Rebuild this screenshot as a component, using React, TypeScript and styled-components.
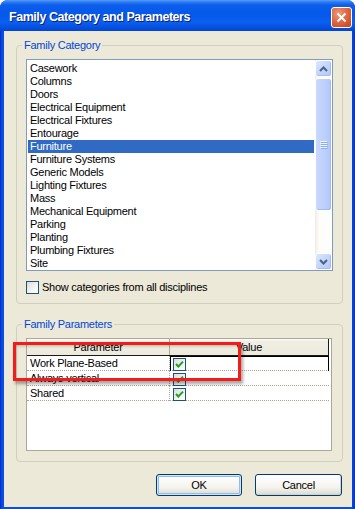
import React from "react";
import styled, { createGlobalStyle } from "styled-components";

const GlobalStyle = createGlobalStyle`
  html, body {
    margin: 0;
    padding: 0;
    background: #ffffff;
  }
  body {
    font-family: "Liberation Sans", Arial, sans-serif;
    font-size: 11px;
    letter-spacing: -0.25px;
    color: #000;
  }
`;

const categories = [
  "Casework",
  "Columns",
  "Doors",
  "Electrical Equipment",
  "Electrical Fixtures",
  "Entourage",
  "Furniture",
  "Furniture Systems",
  "Generic Models",
  "Lighting Fixtures",
  "Mass",
  "Mechanical Equipment",
  "Parking",
  "Planting",
  "Plumbing Fixtures",
  "Site",
];

const parameters = [
  { name: "Work Plane-Based", value: true, current: true },
  { name: "Always vertical", value: true, current: false },
  { name: "Shared", value: true, current: false },
];

const Window = styled.div`
  position: relative;
  width: 355px;
  height: 509px;
  display: flex;
  flex-direction: column;
  background: linear-gradient(to right, #0027c8 0px, #0a4fe2 2px, #0a4fe2 351px, #0034d0 355px);
  border-radius: 8px 8px 0 0;
  overflow: hidden;
`;

const TitleBar = styled.div`
  height: 31px;
  flex: 0 0 31px;
  display: flex;
  align-items: flex-start;
  justify-content: space-between;
  padding: 0 3px 0 9px;
  box-sizing: border-box;
  background: linear-gradient(
    to bottom,
    #5a9ef8 0px,
    #2b7cf4 2px,
    #0d5deb 5px,
    #0458ea 14px,
    #0b60f0 22px,
    #0552e2 27px,
    #0344d2 31px
  );
`;

const Title = styled.div`
  padding-top: 9px;
  font-family: "Liberation Sans", Arial, sans-serif;
  font-weight: bold;
  font-size: 12.5px;
  letter-spacing: -0.45px;
  line-height: 16px;
  color: #ffffff;
  text-shadow: 1px 1px 0 #0a1e74;
  white-space: nowrap;
`;

const CloseButton = styled.div`
  margin-top: 7px;
  width: 21px;
  height: 21px;
  box-sizing: border-box;
  border: 1px solid #ffffff;
  border-radius: 3px;
  background: radial-gradient(circle at 35% 30%, #ec9a7f 0%, #df6a45 45%, #c63d17 100%);
  display: flex;
  align-items: center;
  justify-content: center;
`;

const Frame = styled.div`
  flex: 1;
  display: flex;
  padding: 0 3px 2px 4px;
  min-height: 0;
`;

const Body = styled.div`
  flex: 1;
  display: flex;
  flex-direction: column;
  background: #ece9d8;
  padding: 8px 9px 0 12px;
`;

const GroupBox = styled.fieldset<{ $gap: number; $bottom: number }>`
  margin: ${(p) => p.$gap}px 0 0 0;
  padding: 0 9px ${(p) => p.$bottom}px 9px;
  border: 1px solid #d0d0bf;
  border-radius: 4px;
  min-width: 0;
`;

const Legend = styled.legend`
  margin-left: -4px;
  padding: 0 2px;
  font-family: "Liberation Sans", Arial, sans-serif;
  font-size: 11px;
  line-height: 13px;
  color: #0046d5;
`;

const ListBox = styled.div`
  margin-top: 7px;
  width: 307px;
  height: 212px;
  box-sizing: border-box;
  border: 1px solid #7f9db9;
  background: #ffffff;
  display: flex;
`;

const ListItems = styled.div`
  flex: 1;
  padding: 2px 1px 0 1px;
`;

const ListItem = styled.div<{ $selected?: boolean }>`
  height: 13px;
  line-height: 13px;
  padding-left: 2px;
  white-space: nowrap;
  background: ${(p) => (p.$selected ? "#316ac5" : "transparent")};
  color: ${(p) => (p.$selected ? "#ffffff" : "#000000")};
`;

const ScrollBar = styled.div`
  width: 17px;
  display: flex;
  flex-direction: column;
  background: linear-gradient(to right, #eeede5, #fdfdf9 4px, #fefefe);
`;

const ScrollButton = styled.div`
  flex: 0 0 17px;
  box-sizing: border-box;
  border: 1px solid #ffffff;
  border-radius: 3px;
  background: linear-gradient(135deg, #dde7fe 0%, #c4d5fc 50%, #b2c9fa 100%);
  box-shadow: inset -1px -1px 0 #a5bdf3;
  display: flex;
  align-items: center;
  justify-content: center;
`;

const Thumb = styled.div`
  flex: 0 0 133px;
  margin-top: 1px;
  box-sizing: border-box;
  border: 1px solid #ffffff;
  border-radius: 3px;
  background: linear-gradient(to right, #c9d8fd 0%, #bcd0fc 60%, #b0c6f8 100%);
  box-shadow: inset -1px -1px 0 #a2bbf1;
  display: flex;
  flex-direction: column;
  align-items: center;
  justify-content: center;
  gap: 1px;
`;

const Grip = styled.div`
  width: 7px;
  height: 1px;
  background: #eef4fe;
  box-shadow: 1px 1px 0 #8cb0f8;
`;

const Track = styled.div`
  flex: 1;
`;

const CheckRow = styled.label`
  margin-top: 10px;
  display: flex;
  align-items: center;
  gap: 3px;
  height: 13px;
  line-height: 13px;
`;

const CheckBox = styled.span`
  flex: 0 0 13px;
  width: 13px;
  height: 13px;
  box-sizing: border-box;
  border: 1px solid #1c5180;
  background: linear-gradient(135deg, #dcdcd7 0%, #f4f4f0 60%, #ffffff 100%);
  display: flex;
  align-items: center;
  justify-content: center;
`;

const Grid = styled.div`
  margin-top: 7px;
  width: 306px;
  height: 113px;
  box-sizing: border-box;
  border: 1px solid #aca899;
  background: #ffffff;
`;

const GridInner = styled.div`
  width: 302px;
`;

const HeaderRow = styled.div`
  display: grid;
  grid-template-columns: 143px 159px;
  height: 17px;
  box-sizing: border-box;
  border-bottom: 1px solid #1a1a1a;
  background: linear-gradient(to bottom, #ffffff 0px, #f1efe4 2px, #ebeadb 100%);
`;

const HeaderCell = styled.div<{ $last?: boolean }>`
  text-align: center;
  line-height: 16px;
  font-size: 11px;
  border-right: 1px solid ${(p) => (p.$last ? "#1a1a1a" : "#aca899")};
`;

const Row = styled.div`
  display: grid;
  grid-template-columns: 143px 159px;
  height: 15px;
  box-sizing: border-box;
  border-bottom: 1px dotted #aca899;
`;

const NameCell = styled.div`
  padding-left: 3px;
  line-height: 15px;
  white-space: nowrap;
  border-right: 1px dotted #aca899;
`;

const ValueCell = styled.div<{ $current?: boolean }>`
  display: flex;
  align-items: center;
  padding-left: 2px;
  box-sizing: border-box;
  border: 1px solid ${(p) => (p.$current ? "#000000" : "transparent")};
  border-bottom: none;
  border-right-color: ${(p) => (p.$current ? "#000000" : "transparent")};
`;

const ButtonRow = styled.div`
  margin-top: 12px;
  display: flex;
  justify-content: flex-end;
  gap: 13px;
  padding-right: 1px;
`;

const Button = styled.button<{ $default?: boolean; $width: number }>`
  width: ${(p) => p.$width}px;
  height: 22px;
  padding: 0;
  font-family: "Liberation Sans", Arial, sans-serif;
  font-size: 11px;
  letter-spacing: -0.25px;
  color: #000;
  border: 1px solid #003c74;
  border-radius: 3px;
  background: linear-gradient(to bottom, #ffffff 0%, #f5f4ef 60%, #e3e1d6 90%, #d6d0c5 100%);
  box-shadow: ${(p) =>
    p.$default
      ? "inset 0 0 0 1px #cee7ff, inset 0 0 0 2px #98b8ea"
      : "inset -1px -1px 0 #d6d0c5"};
`;

const Annotation = styled.div`
  position: absolute;
  left: 13px;
  top: 342px;
  width: 228px;
  height: 39px;
  box-sizing: border-box;
  border: 3px solid #f41b1b;
  box-shadow: 2px 3px 3px rgba(0, 0, 0, 0.35), inset 2px 3px 3px -2px rgba(0, 0, 0, 0.25);
  pointer-events: none;
`;

const CheckMark = () => (
  <svg width="9" height="9" viewBox="0 0 9 9">
    <polyline points="1,4 3.3,6.5 8,1.6" fill="none" stroke="#21a121" strokeWidth="2" />
  </svg>
);

const Arrow = ({ up }: { up?: boolean }) => (
  <svg width="9" height="6" viewBox="0 0 9 6">
    <polyline
      points={up ? "1,5 4.5,1.5 8,5" : "1,1 4.5,4.5 8,1"}
      fill="none"
      stroke="#4d6185"
      strokeWidth="2"
    />
  </svg>
);

export default function App() {
  return (
    <>
      <GlobalStyle />
      <Window>
        <TitleBar>
          <Title>Family Category and Parameters</Title>
          <CloseButton>
            <svg width="11" height="11" viewBox="0 0 11 11">
              <path d="M1.5 1.5 L9.5 9.5 M9.5 1.5 L1.5 9.5" stroke="#ffffff" strokeWidth="2" />
            </svg>
          </CloseButton>
        </TitleBar>
        <Frame>
          <Body>
            <GroupBox $gap={0} $bottom={9}>
              <Legend>Family Category</Legend>
              <ListBox>
                <ListItems>
                  {categories.map((c) => (
                    <ListItem key={c} $selected={c === "Furniture"}>
                      {c}
                    </ListItem>
                  ))}
                </ListItems>
                <ScrollBar>
                  <ScrollButton>
                    <Arrow up />
                  </ScrollButton>
                  <Thumb>
                    <Grip />
                    <Grip />
                    <Grip />
                    <Grip />
                  </Thumb>
                  <Track />
                  <ScrollButton>
                    <Arrow />
                  </ScrollButton>
                </ScrollBar>
              </ListBox>
              <CheckRow>
                <CheckBox />
                Show categories from all disciplines
              </CheckRow>
            </GroupBox>
            <GroupBox $gap={14} $bottom={10}>
              <Legend>Family Parameters</Legend>
              <Grid>
                <GridInner>
                  <HeaderRow>
                    <HeaderCell>Parameter</HeaderCell>
                    <HeaderCell $last>Value</HeaderCell>
                  </HeaderRow>
                  {parameters.map((p) => (
                    <Row key={p.name}>
                      <NameCell>{p.name}</NameCell>
                      <ValueCell $current={p.current}>
                        <CheckBox>{p.value && <CheckMark />}</CheckBox>
                      </ValueCell>
                    </Row>
                  ))}
                </GridInner>
              </Grid>
            </GroupBox>
            <ButtonRow>
              <Button $default $width={86}>
                OK
              </Button>
              <Button $width={87}>Cancel</Button>
            </ButtonRow>
          </Body>
        </Frame>
        <Annotation />
      </Window>
    </>
  );
}
